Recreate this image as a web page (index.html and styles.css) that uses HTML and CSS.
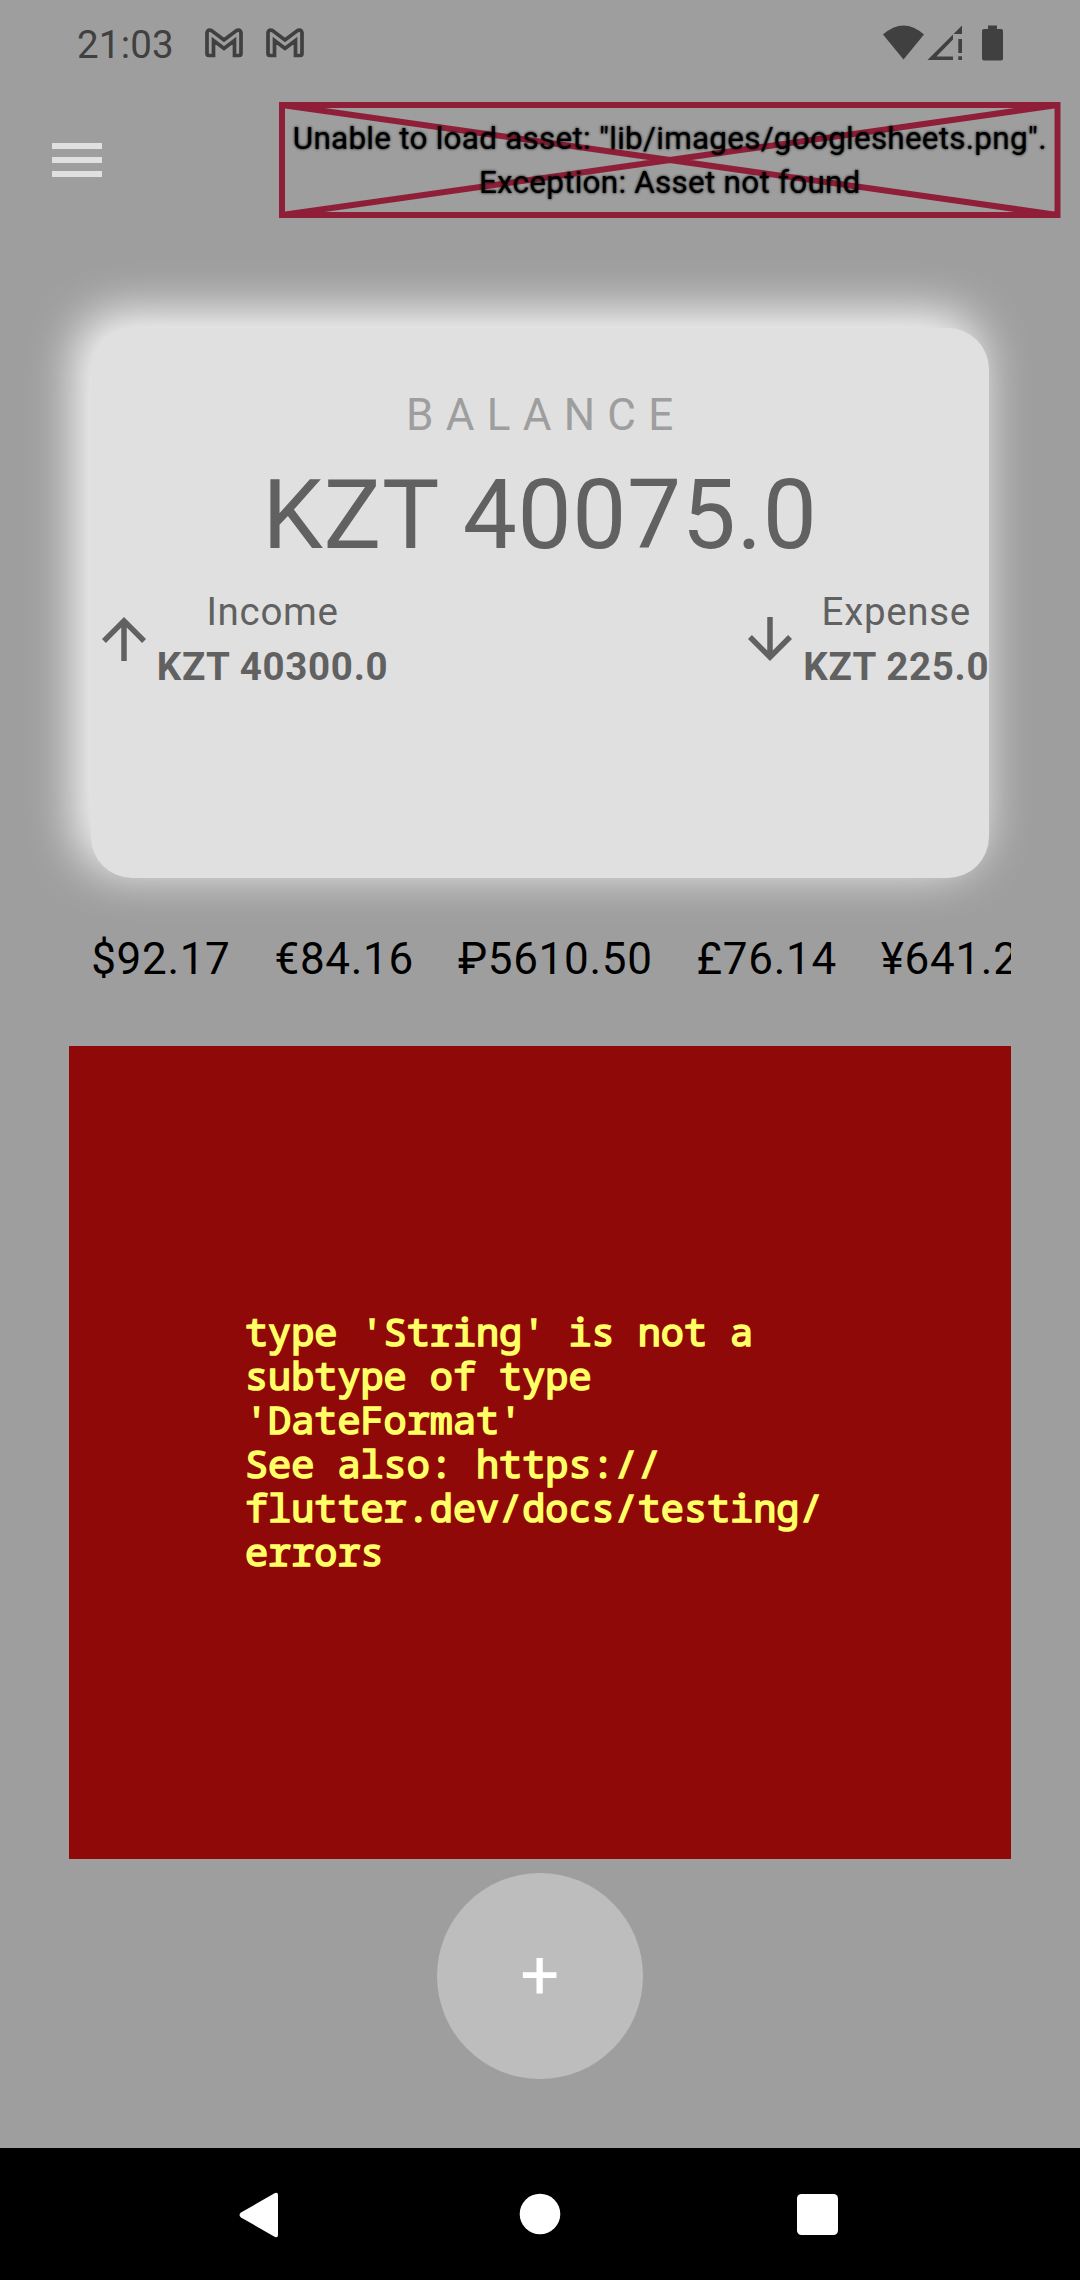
FILE: index.html
```html
<!DOCTYPE html>
<html lang="en">
<head>
<meta charset="utf-8">
<title>Balance</title>
<link rel="stylesheet" href="styles.css">
</head>
<body>
<div class="screen">
  <header class="status">
    <span class="clock">21:03</span>
    <svg class="mail" viewBox="0 0 38 30"><path d="M2 4.5V25.500Q2 27.500 4 27.500H8.500V12.500L19 20.500L29.500 12.500V27.500H34Q36 27.500 36 25.500V4.500Q35 1 31.500 2.500L19 12L6.500 2.500Q3 1 2 4.500Z"/></svg>
    <svg class="mail" viewBox="0 0 38 30"><path d="M2 4.5V25.500Q2 27.500 4 27.500H8.500V12.500L19 20.500L29.500 12.500V27.500H34Q36 27.500 36 25.500V4.500Q35 1 31.500 2.500L19 12L6.500 2.500Q3 1 2 4.500Z"/></svg>
    <svg class="system" viewBox="0 0 120 36">
      <path d="M0 9.500Q20.500 -8.500 41 9.500L20.500 34.500Z"/>
      <path fill-rule="evenodd" d="M44.500 35L70 9.500V14.500L53.500 31.500H70V35ZM79 .5V9H70.500ZM75.300 14H79V28H75.300ZM75.300 31.300H79V35H75.300Z"/>
      <path d="M105 0.500H114V4H118Q120 4 120 6V33.500Q120 35.500 118 35.500H101Q99 35.500 99 33.500V6Q99 4 101 4H105Z"/>
    </svg>
  </header>

  <div class="toolbar">
    <div class="burger"><i></i><i></i><i></i></div>
    <div class="missing">
      <svg class="cross" viewBox="0 0 781.5 116"><path d="M3 3H778.500V113H3ZL778.500 113M778.500 3L3 113"/></svg>
      <p class="missing-text">Unable to load asset: "lib/images/googlesheets.png".<br>Exception: Asset not found</p>
    </div>
  </div>

  <section class="card">
    <div class="label">B A L A N C E</div>
    <div class="total">KZT 40075.0</div>
    <div class="flows">
      <div class="flow">
        <svg class="arrow" viewBox="0 0 24 24"><path d="M4 12l1.410 1.410L11 7.830V20h2V7.830l5.580 5.590L20 12l-8-8-8 8z"/></svg>
        <div class="figures"><span>Income</span><b>KZT 40300.0</b></div>
      </div>
      <div class="flow">
        <svg class="arrow" viewBox="0 0 24 24"><path d="M20 12l-1.410-1.410L13 16.170V4h-2v12.170l-5.580-5.590L4 12l8 8 8-8z"/></svg>
        <div class="figures"><span>Expense</span><b>KZT 225.0</b></div>
      </div>
    </div>
  </section>

  <div class="rates">
    <span>$92.17</span><span>€84.16</span><span>₽5610.50</span><span>£76.14</span><span>¥641.2</span>
  </div>

  <section class="error">type 'String' is not a
subtype of type
'DateFormat'
See also: https://
flutter.dev/docs/testing/
errors</section>

  <div class="add">+</div>

  <nav class="nav">
    <svg viewBox="0 0 600 46">
      <path d="M2 20.500L36 1Q39 0 39 3V43Q39 46 36 45L2 25.500Q-1 23 2 20.500Z"/>
      <circle cx="301" cy="22" r="20.300"/>
      <rect x="558" y="2" width="41" height="41" rx="4.500"/>
    </svg>
  </nav>
</div>
</body>
</html>
```

FILE: styles.css
```css
* { box-sizing: border-box; }

body {
  margin: 0;
  background: #9e9e9e;
  font-family: Roboto, "Liberation Sans", sans-serif;
}

.screen {
  display: flex;
  flex-direction: column;
  width: 1080px;
  height: 2280px;
  overflow: hidden;
  letter-spacing: 0.6875px;
}

.screen > * { flex-shrink: 0; }

.status {
  display: flex;
  align-items: flex-start;
  height: 102px;
  padding: 22px 77px 0 77px;
  color: #404040;
}

.clock {
  width: 127.500px;
  font-size: 38.500px;
  line-height: 45px;
  letter-spacing: 0.2px;
}

.mail {
  width: 38px;
  height: 30px;
  margin: 6px 23px 0 0;
  fill: none;
  stroke: #404040;
  stroke-width: 3.7;
}

.system {
  width: 120px;
  height: 36px;
  margin: 3px 0 0 auto;
  fill: #404040;
}

.toolbar {
  display: flex;
  justify-content: space-between;
  height: 225.750px;
  padding: 0 19.500px 0 52px;
}

.burger {
  display: flex;
  flex-direction: column;
  gap: 8px;
  padding-top: 41px;
}

.burger i {
  width: 50px;
  height: 6px;
  background: #e0e0e0;
}

.missing {
  display: grid;
  width: 781.500px;
  height: 116px;
}

.missing > * { grid-area: 1 / 1; }

.cross {
  width: 781.500px;
  height: 116px;
  fill: none;
  stroke: #8f1f38;
  stroke-width: 6;
}

.missing-text {
  align-self: center;
  margin: 0;
  padding-top: 2px;
  color: #000;
  font-size: 31.400px;
  letter-spacing: 0.28px;
  line-height: 43.600px;
  text-align: center;
  white-space: nowrap;
  text-shadow: 0 0 2.750px #000;
  z-index: 1;
}

.card {
  width: 898.500px;
  height: 550px;
  margin-left: 90.750px;
  padding-top: 56.250px;
  border-radius: 41.250px;
  background: #e0e0e0;
  box-shadow: -11px -11px 50.400px 2.750px #fff;
  color: #616161;
  text-align: center;
  line-height: 1.43;
}

.label {
  color: #9e9e9e;
  font-size: 44px;
}

.total { font-size: 96.250px; }

.flows {
  display: flex;
  justify-content: space-between;
  margin-top: -0.750px;
}

.flow {
  display: flex;
  align-items: center;
}

.arrow {
  width: 66px;
  height: 66px;
  fill: #616161;
}

.figures {
  display: flex;
  flex-direction: column;
  font-size: 38.500px;
}

.rates {
  display: flex;
  gap: 44px;
  height: 168.250px;
  margin: 0 68.750px;
  padding: 50.500px 0 0 22.400px;
  overflow: hidden;
  color: #000;
  font-size: 44px;
  line-height: 62.900px;
  white-space: nowrap;
}

.error {
  height: 813px;
  margin: 0 69px;
  padding: 263px 0 0 176px;
  background: #900909;
  color: #ffff66;
  font-family: "Droid Sans Mono", "Noto Sans Mono", "DejaVu Sans Mono", monospace;
  font-size: 38.500px;
  line-height: 44px;
  letter-spacing: 0;
  white-space: pre;
  -webkit-text-stroke: 1.700px #ffff66;
}

.add {
  width: 206px;
  height: 206px;
  margin: 14px auto 69px;
  border-radius: 50%;
  background: #bdbdbd;
  color: #fff;
  font-size: 68.750px;
  line-height: 203px;
  text-align: center;
}

.nav {
  height: 132px;
  padding: 44px 0 0 239px;
  background: #000;
}

.nav svg {
  display: block;
  width: 600px;
  height: 46px;
  fill: #fff;
}
```
